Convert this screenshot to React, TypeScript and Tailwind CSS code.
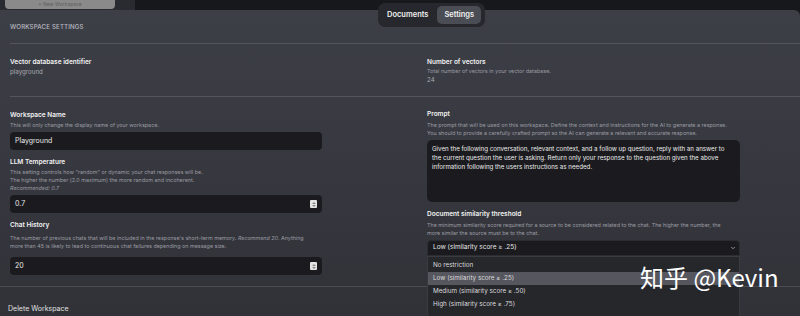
import { ChevronDown } from "lucide-react"

const font = { fontFamily: "Inter, 'Noto Sans', sans-serif" }

const Spinner = () => (
  <div className="flex flex-col items-center justify-center w-[7px] h-[8px] bg-[#e4e4e4] rounded-[1px]">
    <span className="block w-0 h-0 border-x-[2px] border-x-transparent border-b-[2px] border-b-[#888]" />
    <span className="block w-0 h-0 mt-[1px] border-x-[2px] border-x-transparent border-t-[2px] border-t-[#888]" />
  </div>
)

const Title = ({ children, className = "" }: { children: React.ReactNode; className?: string }) => (
  <div className={`text-[6.5px] leading-[9px] font-semibold text-[#f2f2f2] ${className}`}>{children}</div>
)

const Desc = ({ children, className = "" }: { children: React.ReactNode; className?: string }) => (
  <div className={`text-[5.4px] leading-[8px] text-[#9a9ba2] ${className}`}>{children}</div>
)

const NumberInput = ({ value, className = "" }: { value: string; className?: string }) => (
  <div className={`flex items-center justify-between w-[312px] h-[18px] rounded-[4px] bg-[#1b1b1f] pl-[5px] pr-[5px] ${className}`}>
    <span className="text-[7px] text-[#e8e8e8]">{value}</span>
    <Spinner />
  </div>
)

export default function App() {
  return (
    <div style={font} className="relative w-[800px] h-[316px] overflow-hidden bg-[#17181b]">
      {/* TOP STRIP */}
      <div className="flex h-[10px]">
        <div className="w-[135px] bg-[#2a2b30] pl-[5px]">
          <div className="w-[110px] h-[9px] bg-[#8a8a8a] rounded-b-[4px] flex items-start justify-center pt-[1px]">
            <span className="text-[5px] leading-[6px] text-[#5e5e5e]">+ New Workspace</span>
          </div>
        </div>
        <div className="flex-1 bg-[#17181b]" />
      </div>

      {/* PANEL */}
      <div className="h-[306px] bg-gradient-to-b from-[#3d3f47] to-[#313238] rounded-tr-[6px]">
        <div className="pl-[10px] pt-[13px] text-[6.2px] leading-[8px] font-medium uppercase tracking-[0.02em] text-[#b9bac0]">
          Workspace Settings
        </div>

        <div className="ml-[10px] mt-[12px] border-t border-[#53555d]" />

        {/* ROW 1 */}
        <div className="flex h-[52px] pl-[10px]">
          <div className="w-[417px] pt-[14px]">
            <Title>Vector database identifier</Title>
            <div className="text-[6.2px] leading-[9px] text-[#a8a9af]">playground</div>
          </div>
          <div className="flex-1 pt-[14px]">
            <Title>Number of vectors</Title>
            <Desc>Total number of vectors in your vector database.</Desc>
            <div className="text-[6.2px] leading-[9px] text-[#a8a9af]">24</div>
          </div>
        </div>

        <div className="ml-[10px] border-t border-[#53555d]" />

        {/* ROW 2 */}
        <div className="flex pl-[10px]">
          <div className="w-[417px] pt-[14px]">
            <Title>Workspace Name</Title>
            <Desc className="mt-[1px]">This will only change the display name of your workspace.</Desc>
            <div className="mt-[3px] w-[312px] h-[18px] rounded-[4px] bg-[#1b1b1f] pl-[5px] flex items-center">
              <span className="text-[7px] text-[#e8e8e8]">Playground</span>
            </div>

            <Title className="mt-[8px]">LLM Temperature</Title>
            <Desc className="mt-[1px]">
              This setting controls how "random" or dynamic your chat responses will be.
              <br />
              The higher the number (2.0 maximum) the more random and incoherent.
              <br />
              <i>Recommended: 0.7</i>
            </Desc>
            <NumberInput value="0.7" className="mt-[3px]" />

            <Title className="mt-[8px]">Chat History</Title>
            <Desc className="mt-[4px] w-[312px]">
              The number of previous chats that will be included in the response's short-term memory. <i>Recommend 20. </i>Anything
              <br />
              more than 45 is likely to lead to continuous chat failures depending on message size.
            </Desc>
            <NumberInput value="20" className="mt-[7px]" />
          </div>

          <div className="flex-1 pt-[13px]">
            <Title>Prompt</Title>
            <Desc className="mt-[2px]">
              The prompt that will be used on this workspace. Define the context and instructions for the AI to generate a response.
              <br />
              You should to provide a carefully crafted prompt so the AI can generate a relevant and accurate response.
            </Desc>
            <div className="mt-[3px] w-[313px] h-[62px] rounded-[5px] bg-[#1b1b1f] px-[5px] pt-[4px] text-[6.2px] leading-[9px] text-[#ececec]">
              Given the following conversation, relevant context, and a follow up question, reply with an answer to the current question the user is asking. Return only your response to the question given the above information following the users instructions as needed.
            </div>

            <Title className="mt-[8px]">Document similarity threshold</Title>
            <Desc className="mt-[2px] w-[313px]">
              The minimum similarity score required for a source to be considered related to the chat. The higher the number, the
              <br />
              more similar the source must be to the chat.
            </Desc>
            <div className="relative mt-[3px] w-[313px]">
              <div className="flex items-center justify-between h-[16px] rounded-t-[4px] bg-[#1b1b1f] border border-[#2c2d32] pl-[5px] pr-[3px]">
                <span className="text-[6.5px] text-[#e8e8e8]">Low (similarity score ≥ .25)</span>
                <ChevronDown className="w-[6px] h-[6px] text-[#bbb]" strokeWidth={3} />
              </div>
              <div className="absolute left-0 top-full w-[313px] h-[62px] bg-[#26272b] border border-[#3a3b41] rounded-b-[4px] pt-[2px] text-[6.3px] text-[#dcdcdc]">
                <div className="h-[13px] flex items-center pl-[5px]">No restriction</div>
                <div className="h-[13px] flex items-center pl-[5px] bg-[#55565e]">Low (similarity score ≥ .25)</div>
                <div className="h-[13px] flex items-center pl-[5px]">Medium (similarity score ≥ .50)</div>
                <div className="h-[13px] flex items-center pl-[5px]">High (similarity score ≥ .75)</div>
              </div>
            </div>
          </div>
        </div>

        <div className="mt-[11px] border-t border-[#4a4c54]" />
        <div className="pl-[8px] pt-[17px] text-[7px] leading-[9px] text-[#e0e0e0]">Delete Workspace</div>
      </div>

      {/* TABS */}
      <div className="absolute left-[378px] top-[3px] flex items-center gap-[4px] h-[24px] px-[4px] rounded-[7px] bg-[#27282d]">
        <div className="px-[5px] h-[18px] flex items-center text-[7.5px] font-semibold text-[#f0f0f0]">Documents</div>
        <div className="px-[7px] h-[18px] flex items-center rounded-[5px] bg-[#4b4d55] text-[7.5px] font-semibold text-[#f0f0f0]">Settings</div>
      </div>

      {/* WATERMARK */}
      <div
        className="absolute left-[640px] top-[263px] text-[24px] leading-[28px] text-white whitespace-nowrap"
        style={{ fontFamily: "'Noto Sans CJK SC', 'Noto Sans', sans-serif" }}
      >
        知乎 @Kevin
      </div>
    </div>
  )
}
